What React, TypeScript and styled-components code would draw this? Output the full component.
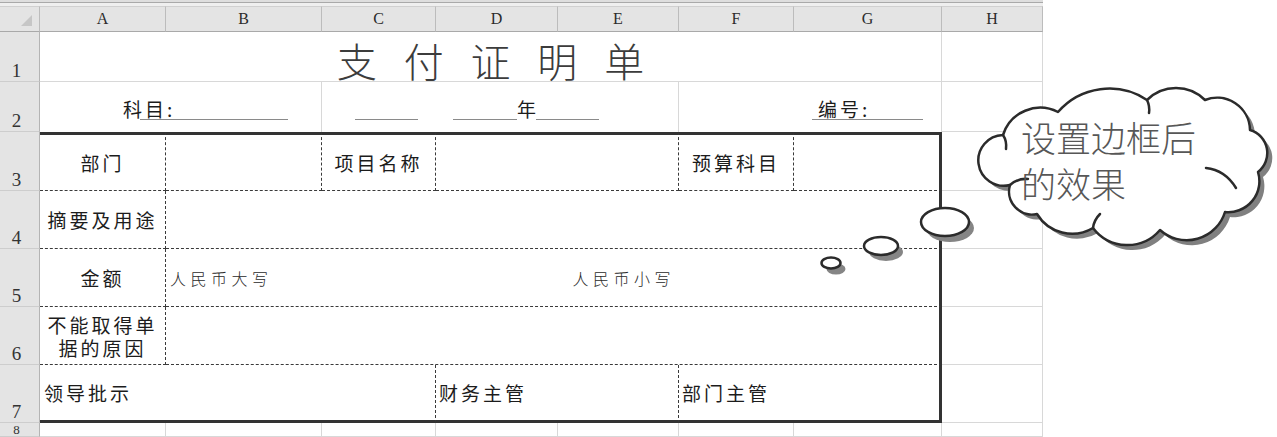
import React from 'react';
import styled, { createGlobalStyle } from 'styled-components';

type Line = 'grid' | 'dash' | 'thick' | 'none';

const lineCss = (l: Line) => {
  if (l === 'dash') return '1px dashed #3a3a3a';
  if (l === 'thick') return '3px solid #333';
  if (l === 'none') return 'none';
  return '1px solid #d8d8d8';
};

const GlobalStyle = createGlobalStyle`
  html, body {
    margin: 0;
    padding: 0;
    background: #fff;
  }
  body {
    font-family: "Noto Sans CJK SC", "Noto Sans", sans-serif;
    color: #1c1c1c;
  }
`;

const Page = styled.div`
  position: relative;
  width: 1277px;
  height: 437px;
  overflow: hidden;
  background: #fff;
`;

const TopStrip = styled.div`
  width: 1043px;
  height: 6px;
  background: linear-gradient(#dedede 0 2px, #a9a9a9 2px 3px, #efefef 3px 6px);
`;

const Sheet = styled.div`
  display: grid;
  width: 1043px;
  grid-template-columns: 40px 126px 156px 114px 122px 121px 115px 148px 101px;
  grid-template-rows: 26px 50px 50px 59px 58px 58px 58px 58px 14px;
`;

const Corner = styled.div`
  display: flex;
  align-items: flex-end;
  justify-content: flex-end;
  padding: 0 7px 5px 0;
  background: #e4e4e4;
  border-right: 1px solid #bcbcbc;
  border-bottom: 1px solid #a9a9a9;
  border-top: 1px solid #d0d0d0;
`;

const CornerMark = styled.div`
  width: 11px;
  height: 11px;
  background: #c6c6c6;
  clip-path: polygon(100% 0, 100% 100%, 0 100%);
`;

const ColHead = styled.div`
  display: flex;
  align-items: center;
  justify-content: center;
  background: #e4e4e4;
  border-right: 1px solid #bcbcbc;
  border-bottom: 1px solid #a9a9a9;
  border-top: 1px solid #d0d0d0;
  font-family: "Liberation Serif", serif;
  font-size: 16px;
  color: #2b2b2b;
`;

const RowHead = styled.div<{ $small?: boolean }>`
  display: flex;
  align-items: flex-end;
  justify-content: center;
  padding: 0 6px ${p => (p.$small ? 0 : 1)}px 0;
  overflow: hidden;
  background: #e4e4e4;
  border-right: 1px solid #b4b4b4;
  border-bottom: 1px solid #cdcdcd;
  font-family: "Liberation Serif", serif;
  font-size: ${p => (p.$small ? 13 : 19)}px;
  line-height: ${p => (p.$small ? 12 : 19)}px;
  color: #333;
`;

const Cell = styled.div<{
  $r?: Line;
  $b?: Line;
  $t?: Line;
  $span?: number;
  $align?: 'left' | 'center';
  $pad?: number;
}>`
  grid-column: span ${p => p.$span ?? 1};
  display: flex;
  flex-direction: column;
  justify-content: center;
  align-items: ${p => (p.$align === 'left' ? 'flex-start' : 'center')};
  padding-left: ${p => p.$pad ?? 0}px;
  border-top: ${p => lineCss(p.$t ?? 'none')};
  border-right: ${p => lineCss(p.$r ?? 'grid')};
  border-bottom: ${p => lineCss(p.$b ?? 'grid')};
  box-sizing: border-box;
  min-width: 0;
`;

const SplitCell = styled(Cell)`
  flex-direction: row;
  justify-content: flex-start;
  align-items: center;
`;

const Title = styled.div`
  margin-top: 6px;
  font-size: 40px;
  font-weight: 300;
  word-spacing: 18px;
  color: #3c3c3c;
  line-height: 40px;
`;

const Label = styled.span`
  font-size: 19px;
  letter-spacing: 3px;
  line-height: 23px;
  color: #1c1c1c;
`;

const StackLabel = styled.div`
  font-size: 19px;
  letter-spacing: 3px;
  line-height: 23px;
  height: 23px;
  color: #1c1c1c;
`;

const Hint = styled.span<{ $shift?: number }>`
  margin-left: ${p => p.$shift ?? 0}px;
  font-size: 16px;
  font-weight: 300;
  letter-spacing: 4.5px;
  color: #2a2a2a;
`;

const FieldRow = styled.div`
  display: flex;
  align-items: flex-end;
  height: 100%;
  padding-bottom: 12px;
  box-sizing: border-box;
`;

const Blank = styled.span<{ $w: number; $gap?: number }>`
  display: inline-block;
  width: ${p => p.$w}px;
  margin-left: ${p => p.$gap ?? 0}px;
  border-bottom: 1px solid #8a8a8a;
  height: 1px;
`;

const Overlay = styled.svg`
  position: absolute;
  left: 0;
  top: 0;
  pointer-events: none;
`;

const CalloutText = styled.div`
  position: absolute;
  left: 1021px;
  top: 114px;
  font-size: 35px;
  font-weight: 300;
  line-height: 46px;
  color: #575757;
  white-space: nowrap;
`;

const cloudPath = [
  'M1003 135',
  'A39 39 0 0 1 1058 112',
  'A68 68 0 0 1 1147 100',
  'A41 41 0 0 1 1205 100',
  'A33 33 0 0 1 1250 130',
  'A24 24 0 0 1 1258 172',
  'A31 31 0 0 1 1225 212',
  'A40 40 0 0 1 1160 230',
  'A43 43 0 0 1 1093 228',
  'A41 41 0 0 1 1037 214',
  'A23 23 0 0 1 1010 185',
  'A25.4 25.4 0 1 1 1003 135',
  'Z',
].join(' ');

const curls = [
  'M1010 185 Q1018 178 1028 179',
  'M1003 135 Q1007 141 1006 149',
  'M1206 168 Q1225 170 1236 188',
  'M1093 228 Q1094 220 1100 214',
  'M1147 100 Q1150 106 1149 113',
];

const bubbles = [
  { cx: 945, cy: 222, rx: 24, ry: 14 },
  { cx: 881, cy: 246, rx: 17, ry: 9 },
  { cx: 831, cy: 263, rx: 9.5, ry: 5.5 },
];

const Callout: React.FC = () => (
  <>
    <Overlay width={1277} height={437} viewBox="0 0 1277 437">
      {bubbles.map((b, i) => (
        <g key={i}>
          <ellipse cx={b.cx + 5} cy={b.cy + 6} rx={b.rx} ry={b.ry} fill="#858585" />
          <ellipse cx={b.cx} cy={b.cy} rx={b.rx} ry={b.ry} fill="#fff" stroke="#2b2b2b" strokeWidth={2.5} />
        </g>
      ))}
      <path d={cloudPath} transform="translate(5 5)" fill="#808080" />
      <path d={cloudPath} fill="#fff" stroke="#2b2b2b" strokeWidth={2.5} strokeLinejoin="round" />
      {curls.map((d, i) => (
        <path key={i} d={d} fill="none" stroke="#2b2b2b" strokeWidth={2.5} strokeLinecap="round" />
      ))}
    </Overlay>
    <CalloutText>
      设置边框后
      <br />
      的效果
    </CalloutText>
  </>
);

const cols = ['A', 'B', 'C', 'D', 'E', 'F', 'G', 'H'];

const App: React.FC = () => {
  return (
    <Page>
      <GlobalStyle />
      <TopStrip />
      <Sheet>
        <Corner>
          <CornerMark />
        </Corner>
        {cols.map(c => (
          <ColHead key={c}>{c}</ColHead>
        ))}

        {/* row 1 */}
        <RowHead>1</RowHead>
        <Cell $span={7}>
          <Title>支 付 证 明 单</Title>
        </Cell>
        <Cell />

        {/* row 2 */}
        <RowHead>2</RowHead>
        <Cell $span={2} $b="none" $align="left" $pad={83}>
          <FieldRow>
            <Label>科目:</Label>
            <Blank $w={148} $gap={-35} />
          </FieldRow>
        </Cell>
        <Cell $span={3} $b="none" $align="left" $pad={33}>
          <FieldRow>
            <Blank $w={63} />
            <Blank $w={64} $gap={35} />
            <Label>年</Label>
            <Blank $w={63} $gap={-3} />
          </FieldRow>
        </Cell>
        <Cell $span={2} $b="none" $align="left" $pad={133}>
          <FieldRow>
            <Blank $w={111} />
            <Label style={{ marginLeft: -105 }}>编号:</Label>
          </FieldRow>
        </Cell>
        <Cell />

        {/* row 3 */}
        <RowHead>3</RowHead>
        <Cell $t="thick" $r="dash" $b="dash">
          <Label>部门</Label>
        </Cell>
        <Cell $t="thick" $r="dash" $b="dash" />
        <Cell $t="thick" $r="dash" $b="dash">
          <Label>项目名称</Label>
        </Cell>
        <Cell $t="thick" $span={2} $r="dash" $b="dash" />
        <Cell $t="thick" $r="dash" $b="dash">
          <Label>预算科目</Label>
        </Cell>
        <Cell $t="thick" $r="thick" $b="dash" />
        <Cell />

        {/* row 4 */}
        <RowHead>4</RowHead>
        <Cell $r="dash" $b="dash">
          <Label>摘要及用途</Label>
        </Cell>
        <Cell $span={6} $r="thick" $b="dash" />
        <Cell />

        {/* row 5 */}
        <RowHead>5</RowHead>
        <Cell $r="dash" $b="dash">
          <Label>金额</Label>
        </Cell>
        <SplitCell $span={6} $r="thick" $b="dash" $pad={4}>
          <Hint>人民币大写</Hint>
          <Hint $shift={300}>人民币小写</Hint>
        </SplitCell>
        <Cell />

        {/* row 6 */}
        <RowHead>6</RowHead>
        <Cell $r="dash" $b="dash">
          <StackLabel>不能取得单</StackLabel>
          <StackLabel>据的原因</StackLabel>
        </Cell>
        <Cell $span={6} $r="thick" $b="dash" />
        <Cell />

        {/* row 7 */}
        <RowHead>7</RowHead>
        <Cell $span={3} $r="dash" $b="thick" $align="left" $pad={4}>
          <Label>领导批示</Label>
        </Cell>
        <Cell $span={2} $r="dash" $b="thick" $align="left" $pad={3}>
          <Label>财务主管</Label>
        </Cell>
        <Cell $span={2} $r="thick" $b="thick" $align="left" $pad={3}>
          <Label>部门主管</Label>
        </Cell>
        <Cell />

        {/* row 8 */}
        <RowHead $small>8</RowHead>
        {cols.map(c => (
          <Cell key={c} />
        ))}
      </Sheet>
      <Callout />
    </Page>
  );
};

export default App;
